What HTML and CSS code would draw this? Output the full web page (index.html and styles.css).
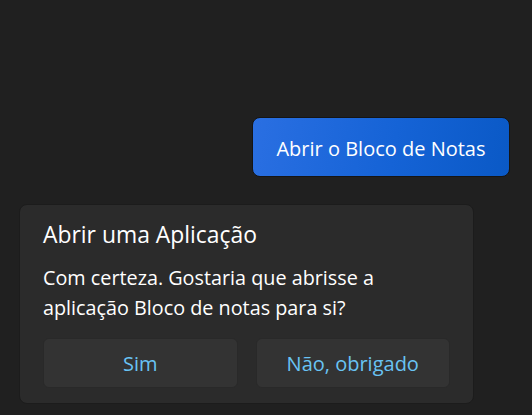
FILE: index.html
```html
<!DOCTYPE html>
<html lang="pt">
<head>
<meta charset="utf-8">
<link rel="stylesheet" href="styles.css">
</head>
<body>
<div class="chat">
  <div class="row-user">
    <div class="bubble">Abrir o Bloco de Notas</div>
  </div>
  <div class="card">
    <div class="title">Abrir uma Aplicação</div>
    <div class="body">Com certeza. Gostaria que abrisse a aplicação Bloco de notas para si?</div>
    <div class="actions">
      <button class="btn">Sim</button>
      <button class="btn">Não, obrigado</button>
    </div>
  </div>
</div>
</body>
</html>
```
FILE: styles.css
```css
html, body {
  margin: 0;
  padding: 0;
  background: #202020;
  width: 532px;
  height: 415px;
  overflow: hidden;
}
.chat {
  font-family: "Open Sans", "Noto Sans", sans-serif;
  color: #ffffff;
  padding: 117px 22px 0 19px;
  display: flex;
  flex-direction: column;
}
.row-user {
  display: flex;
  justify-content: flex-end;
}
.bubble {
  width: 258px;
  height: 60px;
  box-sizing: border-box;
  display: flex;
  align-items: center;
  justify-content: center;
  padding-top: 2px;
  border-radius: 8px;
  background: linear-gradient(100deg, #2a6fe2 0%, #1563d6 55%, #0a59c6 100%);
  border: 1px solid #151515;
  font-size: 20px;
  color: #ffffff;
}
.card {
  margin-top: 27px;
  width: 455px;
  height: 200px;
  box-sizing: border-box;
  background: #2b2b2b;
  border: 1px solid #1c1c1c;
  border-radius: 8px;
  padding: 16px 23px 15px 23px;
  display: flex;
  flex-direction: column;
}
.title {
  font-size: 22.9px;
  line-height: 28px;
  color: #ffffff;
}
.body {
  margin-top: 14px;
  font-size: 19.8px;
  line-height: 30px;
  color: #ffffff;
  width: 370px;
}
.actions {
  margin-top: auto;
  display: flex;
  gap: 18px;
}
.btn {
  flex: 1;
  height: 50px;
  background: #333333;
  border: 1px solid #292929;
  border-radius: 6px;
  color: #69c3f4;
  font-family: "Open Sans", "Noto Sans", sans-serif;
  font-size: 20px;
  padding: 0;
}
```
